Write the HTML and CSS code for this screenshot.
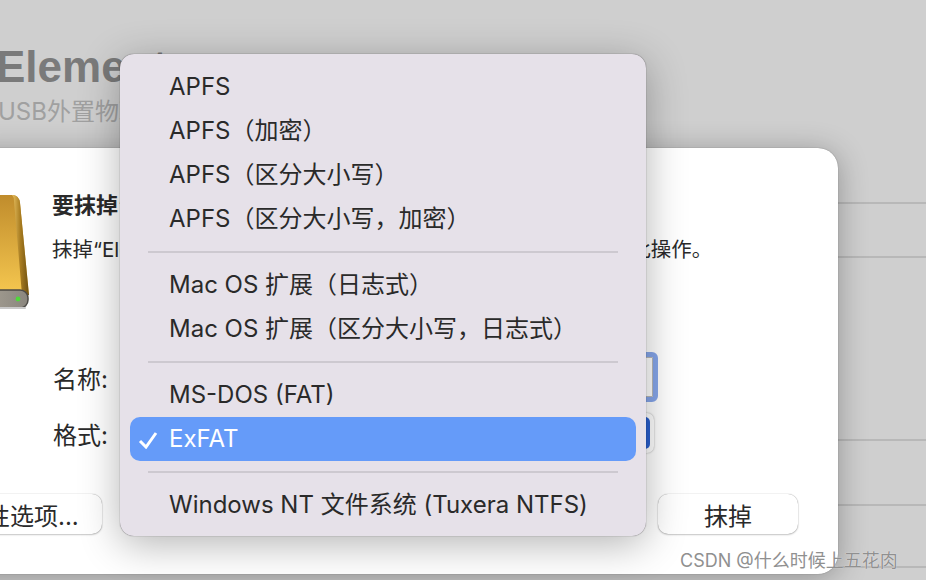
FILE: index.html
```html
<!DOCTYPE html>
<html lang="zh-CN">
<head>
  <meta charset="UTF-8">
  <title>抹掉 Elements</title>
  <link rel="stylesheet" href="styles.css">
</head>
<body>
  <div class="page">
    <div class="main">
      <div class="head">
        <div class="head-title">Elements</div>
        <div class="head-sub">USB外置物理卷</div>
      </div>

      <div class="dialog">
        <div class="dialog-top">
          <svg class="drive" width="70" height="120" viewBox="0 0 70 120">
            <defs>
              <linearGradient id="gold" x1="0" y1="0" x2="0" y2="1">
                <stop offset="0" stop-color="#c08c2c"/>
                <stop offset="1" stop-color="#f6c850"/>
              </linearGradient>
              <linearGradient id="edge" x1="0" y1="0" x2="1" y2="0">
                <stop offset="0" stop-color="#e8c060"/>
                <stop offset="0.5" stop-color="#a87c20"/>
                <stop offset="1" stop-color="#6e5012"/>
              </linearGradient>
              <linearGradient id="base" x1="0" y1="0" x2="1" y2="0">
                <stop offset="0" stop-color="#b5aea0"/>
                <stop offset="1" stop-color="#8a867e"/>
              </linearGradient>
            </defs>
            <path d="M0 0H52Q59 0 60 8L69 100H0Z" fill="url(#gold)"/>
            <path d="M52 0Q59 0 60 8L69 100H62L54 6Q54 2 52 0Z" fill="url(#edge)"/>
            <rect x="0" y="95" width="68" height="18" rx="8" fill="url(#base)" stroke="#4c4a46" stroke-width="1.5"/>
            <rect x="0" y="112" width="66" height="2" rx="1" fill="#c9c9c9"/>
            <circle cx="58" cy="104" r="2.4" fill="#4fd83a"/>
          </svg>
          <div class="dialog-text">
            <div class="dialog-title">要抹掉“Elements”吗？</div>
            <div class="dialog-msg">抹掉“Elements”将永久抹掉储存在其上的所有数据。您不能撤销此操作。</div>
          </div>
        </div>

        <div class="form">
          <div class="form-row row-name">
            <span class="form-label">名称:</span>
            <div class="name-input"></div>
          </div>
          <div class="form-row row-format">
            <span class="form-label">格式:</span>
            <div class="format-select"><div class="format-arrow"></div></div>
          </div>
        </div>

        <div class="footer">
          <button class="btn btn-options">安全性选项...</button>
          <button class="btn btn-erase">抹掉</button>
        </div>
      </div>
    </div>

    <div class="side">
      <div class="side-row row-a"></div>
      <div class="side-row row-b"></div>
      <div class="side-row row-c"></div>
      <div class="side-row row-d"></div>
      <div class="side-row row-e"></div>
    </div>
  </div>

  <div class="menu">
    <div class="menu-item">APFS</div>
    <div class="menu-item">APFS（加密）</div>
    <div class="menu-item">APFS（区分大小写）</div>
    <div class="menu-item">APFS（区分大小写，加密）</div>
    <div class="menu-sep"></div>
    <div class="menu-item">Mac OS 扩展（日志式）</div>
    <div class="menu-item">Mac OS 扩展（区分大小写，日志式）</div>
    <div class="menu-sep"></div>
    <div class="menu-item">MS-DOS (FAT)</div>
    <div class="menu-item active">
      <svg class="check" width="20" height="18" viewBox="0 0 20 18">
        <path d="M2 10L8 16L18 2" fill="none" stroke="#fff" stroke-width="3"/>
      </svg>
      ExFAT
    </div>
    <div class="menu-sep"></div>
    <div class="menu-item">Windows NT 文件系统 (Tuxera NTFS)</div>
  </div>

  <div class="watermark">CSDN @什么时候上五花肉</div>
</body>
</html>
```

FILE: styles.css
```css
*{
  margin: 0;
  padding: 0;
  box-sizing: border-box;
}
body{
  font-family: Inter, "Noto Sans CJK SC", "Liberation Sans", sans-serif;
  width: 926px;
  height: 580px;
  overflow: hidden;
  position: relative;
  background-color: #cfcfcf;
  color: #2a2a2a;
}
.page{
  display: flex;
  height: 580px;
}
.main{
  width: 838px;
  flex-shrink: 0;
  position: relative;
  z-index: 1;
}
.head{
  height: 148px;
  padding-top: 42px;
}
.head-title{
  margin-left: -4px;
  font-family: "Liberation Sans", sans-serif;
  font-size: 44px;
  line-height: 50px;
  font-weight: 700;
  color: #7a7a7a;
}
.head-sub{
  margin-top: 5px;
  margin-left: -2px;
  font-size: 24px;
  line-height: 30px;
  color: #a0a0a0;
}

/* dialog */
.dialog{
  margin-left: -40px;
  height: 426px;
  padding: 42px 40px 40px 0;
  background-color: #fff;
  border-radius: 20px;
  box-shadow: 0 0 1px rgba(0,0,0,.5), 0 4px 30px rgba(0,0,0,.3);
}
.dialog-top{
  display: flex;
  height: 120px;
}
.drive{
  flex-shrink: 0;
  margin-top: 5px;
  margin-right: 22px;
}
.dialog-title{
  font-size: 22px;
  line-height: 30px;
  font-weight: 700;
}
.dialog-msg{
  margin-top: 16px;
  font-size: 20.5px;
  line-height: 28px;
  white-space: nowrap;
}
.form{
  margin-top: 42px;
  margin-left: 93px;
  margin-right: 140px;
}
.form-row{
  display: flex;
  align-items: center;
}
.row-name{
  height: 50px;
}
.row-format{
  height: 40px;
  margin-top: 11px;
  margin-right: 4px;
}
.form-label{
  width: 80px;
  font-size: 24px;
  flex-shrink: 0;
}
.name-input{
  flex: 1;
  height: 50px;
  background-color: #fff;
  border: 5px solid #86a6ea;
  border-radius: 6px;
  box-shadow: inset 0 0 0 1px #b9b9b9;
}
.format-select{
  flex: 1;
  height: 40px;
  padding: 4px;
  display: flex;
  justify-content: flex-end;
  background-color: #fff;
  border-radius: 7px;
  box-shadow: 0 0 2px rgba(0,0,0,.35);
}
.format-arrow{
  width: 34px;
  background-color: #2a60d0;
  border-radius: 5px;
}
.footer{
  margin-top: 41px;
  display: flex;
  justify-content: space-between;
}
.btn{
  height: 40px;
  font-family: inherit;
  font-size: 24px;
  color: #2a2a2a;
  background-color: #fff;
  border: none;
  border-radius: 10px;
  box-shadow: 0 0 1px rgba(0,0,0,.45), 0 1px 2px rgba(0,0,0,.2);
}
.btn-options{
  width: 180px;
  margin-left: -38px;
  padding-left: 16px;
  text-align: left;
}
.btn-erase{
  width: 140px;
}

/* background list on the right */
.side{
  flex: 1;
}
.side-row{
  border-bottom: 2px solid #b8b8b8;
}
.row-a{ height: 204px; }
.row-b{ height: 54px; }
.row-c{ height: 183px; }
.row-d{ height: 65px; }
.row-e{ height: 62px; }

/* popup menu */
.menu{
  position: absolute;
  z-index: 2;
  top: 54px;
  left: 120px;
  width: 526px;
  height: 482px;
  padding: 11px 10px 9px;
  background-color: #e6e1e9;
  border-radius: 14px;
  box-shadow: 0 0 1px rgba(0,0,0,.7), 0 8px 40px rgba(0,0,0,.3);
}
.menu-item{
  position: relative;
  height: 44px;
  padding-left: 39px;
  font-size: 24px;
  line-height: 44px;
  white-space: nowrap;
  border-radius: 10px;
}
.menu-item.active{
  background-color: #659bf9;
  color: #fff;
}
.check{
  position: absolute;
  left: 8px;
  top: 14px;
}
.menu-sep{
  height: 2px;
  margin: 10px 18px;
  background-color: #cdc9d0;
}
.watermark{
  position: absolute;
  z-index: 3;
  left: 680px;
  top: 549px;
  font-size: 18px;
  line-height: 24px;
  color: #909090;
  text-shadow: 0 0 1px #fff;
  white-space: nowrap;
}
```
